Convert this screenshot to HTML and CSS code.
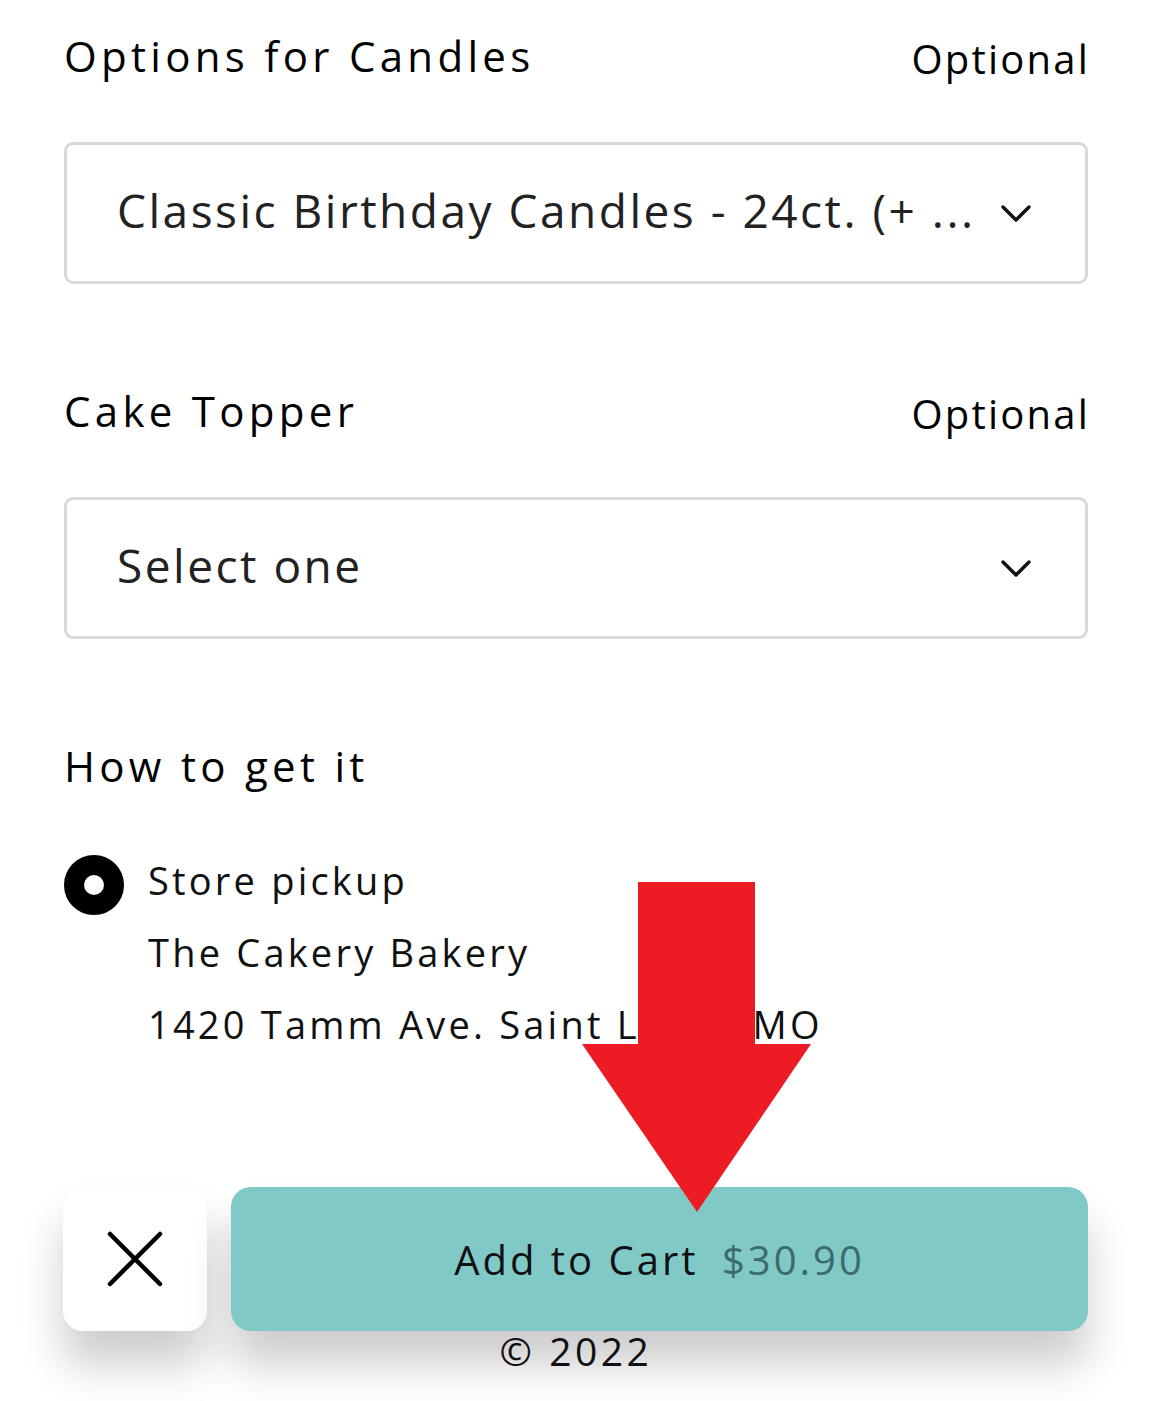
FILE: index.html
```html
<!DOCTYPE html>
<html lang="en">
  <head>
    <meta charset="UTF-8" />
    <meta name="viewport" content="width=device-width, initial-scale=1.0" />
    <title>Cake Options</title>
    <link rel="stylesheet" href="styles.css">
  </head>
  <body>
    <div class="main">
      <div class="field">
        <div class="label-row">
          <h2>Options for Candles</h2>
          <span class="optional">Optional</span>
        </div>
        <div class="select">
          <span class="select-text">Classic Birthday Candles - 24ct. (+ ...</span>
          <svg class="chevron" width="32" height="20" viewBox="0 0 32 20"><path d="M3 4 L16 17 L29 4" fill="none" stroke="#111" stroke-width="3.4" stroke-linecap="round" stroke-linejoin="round"/></svg>
        </div>
      </div>
      <div class="field">
        <div class="label-row">
          <h2>Cake Topper</h2>
          <span class="optional">Optional</span>
        </div>
        <div class="select">
          <span class="select-text">Select one</span>
          <svg class="chevron" width="32" height="20" viewBox="0 0 32 20"><path d="M3 4 L16 17 L29 4" fill="none" stroke="#111" stroke-width="3.4" stroke-linecap="round" stroke-linejoin="round"/></svg>
        </div>
      </div>
      <div class="field">
        <div class="label-row">
          <h2>How to get it</h2>
        </div>
        <div class="pickup">
          <span class="radio"></span>
          <div class="pickup-lines">
            <div>Store pickup</div>
            <div>The Cakery Bakery</div>
            <div>1420 Tamm Ave. Saint Louis, MO</div>
          </div>
        </div>
      </div>
      <div class="actions">
        <button class="close" type="button">
          <svg width="56" height="56" viewBox="0 0 56 56"><path d="M3 3 L53 53 M53 3 L3 53" stroke="#000" stroke-width="4.5" stroke-linecap="round"/></svg>
        </button>
        <button class="add" type="button">Add to Cart <span class="price">$30.90</span></button>
      </div>
      <p class="copy">© 2022</p>
    </div>
    <svg class="arrow" width="230" height="330" viewBox="0 0 230 330"><polygon points="56,0 173,0 173,162 229,162 115,330 0,162 56,162" fill="#ed1c24"/></svg>
  </body>
</html>
```

FILE: styles.css
```css
body {
  margin: 0;
  background: #ffffff;
  font-family: "Open Sans", "Noto Sans", sans-serif;
  color: #111111;
  position: relative;
  min-height: 1401px;
  overflow: hidden;
}
.main {
  padding: 21px 61px 0 64px;
}
.field {
  margin-bottom: 92px;
}
.label-row {
  display: flex;
  justify-content: space-between;
  align-items: baseline;
  height: 70px;
  line-height: 70px;
  margin-bottom: 51px;
}
h2 {
  margin: 0;
  font-size: 42px;
  font-weight: 500;
  letter-spacing: 4.3px;
  color: #000000;
}
.optional {
  font-size: 40px;
  letter-spacing: 2.2px;
  color: #000000;
  position: relative;
  top: 2px;
  margin-right: -2px;
}
.select {
  height: 142px;
  box-sizing: border-box;
  border: 3px solid #d9d9d9;
  border-radius: 9px;
  display: flex;
  align-items: center;
  padding: 0 53px 0 50px;
}
.select-text {
  flex: 1;
  font-size: 46px;
  letter-spacing: 2.5px;
  color: #222222;
  white-space: nowrap;
  position: relative;
  top: -3px;
}
.chevron {
  flex: none;
}
.pickup {
  display: flex;
  align-items: flex-start;
  margin-top: -8px;
}
.radio {
  width: 60px;
  height: 60px;
  box-sizing: border-box;
  border-radius: 50%;
  border: 20px solid #000000;
  background: #ffffff;
  margin-top: 11px;
  margin-right: 24px;
  flex: none;
}
.pickup-lines {
  font-size: 38px;
  letter-spacing: 3.2px;
  line-height: 72px;
  color: #111111;
}
.actions {
  display: flex;
  gap: 24px;
  margin-top: 127px;
}
.actions button {
  height: 144px;
  border: 0;
  border-radius: 20px;
  box-shadow: 0 34px 44px rgba(0, 0, 0, 0.2);
  font-family: inherit;
  cursor: pointer;
}
.close {
  width: 144px;
  flex: none;
  background: #ffffff;
  display: flex;
  align-items: center;
  justify-content: center;
  margin-left: -1px;
}
.add {
  flex: 1;
  background: #80c9c7;
  font-size: 40px;
  letter-spacing: 3px;
  color: #111111;
}
.price {
  color: #3d6b69;
  margin-left: 10px;
}
.copy {
  margin: 0;
  text-align: center;
  font-size: 39px;
  letter-spacing: 3.5px;
  line-height: 40px;
  position: relative;
  z-index: 1;
}
.arrow {
  position: absolute;
  left: 582px;
  top: 882px;
}
```
